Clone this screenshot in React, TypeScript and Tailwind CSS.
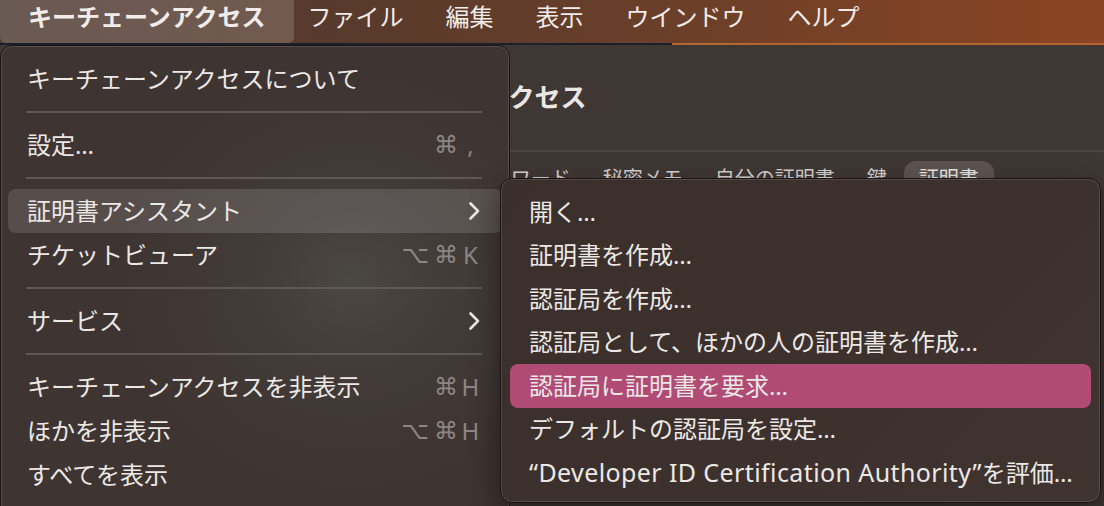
import React from "react";

const FONT = "font-['Noto_Sans','Noto_Sans_CJK_JP',sans-serif]";

function Chevron() {
  return (
    <svg width="14" height="20" viewBox="0 0 14 20" className="ml-auto mr-[2px]">
      <path d="M3.5 2.5 L11 10 L3.5 17.5" fill="none" stroke="#ece8e6" strokeWidth="2.6" strokeLinecap="round" strokeLinejoin="round" />
    </svg>
  );
}

function Shortcut({ mods, k }: { mods: string[]; k: string }) {
  return (
    <div className="ml-auto flex items-center text-[#8e8683]">
      <span className="flex gap-[5px] font-['DejaVu_Sans',sans-serif] text-[24px] leading-none">
        {mods.map((m, i) => (
          <span key={i}>{m}</span>
        ))}
      </span>
      <span className="w-[25px] text-center text-[24px] leading-none">{k}</span>
    </div>
  );
}

function Row({ children, right, active }: { children: React.ReactNode; right?: React.ReactNode; active?: boolean }) {
  return (
    <div
      className={
        "flex h-[44px] items-center rounded-[8px] pl-[19px] pr-[19px] " +
        (active ? "bg-white/[0.13]" : "")
      }
    >
      <span className="text-[24px] leading-[30px] text-[#ece8e6]">{children}</span>
      {right}
    </div>
  );
}

function Sep() {
  return (
    <div className="flex h-[22px] items-center pl-[18px] pr-[20px]">
      <div className="h-[1.5px] w-full bg-[#5f5754]" />
    </div>
  );
}

function SubRow({ children, active }: { children: React.ReactNode; active?: boolean }) {
  return (
    <div className={"flex h-[43.5px] items-center rounded-[8px] pl-[19px] " + (active ? "bg-[#b04b75]" : "")}>
      <span className="text-[24px] leading-[30px] text-[#ece8e6]">{children}</span>
    </div>
  );
}

export default function App() {
  return (
    <div className={"relative h-[506px] w-[1104px] overflow-hidden bg-[#3f3734] " + FONT}>
      {/* menu bar */}
      <div className="flex h-[43px] bg-[linear-gradient(90deg,#4d3b33_0%,#5a3a2b_35%,#6a3f29_60%,#8b4423_100%)] text-[24px] leading-[28px] text-[#f1ecea]">
        <div className="flex h-full items-start rounded-b-[6px] bg-white/[0.16] px-[28px] pt-[3px] font-bold">
          キーチェーンアクセス
        </div>
        <div className="ml-[14px] flex items-start gap-[42px] pt-[3px]">
          <span>ファイル</span>
          <span>編集</span>
          <span>表示</span>
          <span>ウインドウ</span>
          <span>ヘルプ</span>
        </div>
      </div>
      <div className="flex h-[2px]">
        <div className="w-[672px] bg-[#1a212d]" />
        <div className="flex-1 bg-[#b4662e]" />
      </div>

      {/* background window */}
      <div className="flex flex-col">
        <div className="ml-[329px] mt-[34px] text-[26px] font-bold leading-[36px] text-[#ebe6e4]">
          キーチェーンアクセス
        </div>
        <div className="mt-[35px] h-[2px] bg-[#4c4441]" />
        <div className="ml-[306px] mt-[9px] flex gap-[2px] text-[20px] leading-[36px] text-[#d6d0ce]">
          <span className="px-[15px]">すべての項目</span>
          <span className="px-[15px]">パスワード</span>
          <span className="px-[15px]">秘密メモ</span>
          <span className="px-[15px]">自分の証明書</span>
          <span className="px-[15px]">鍵</span>
          <span className="rounded-[12px] bg-[#5d5451] px-[15px] text-[#ebe6e4]">証明書</span>
        </div>
      </div>

      {/* main menu */}
      <div className="absolute left-0 top-[45px] h-[490px] w-[510px] rounded-[12px] border border-[#1a1311] bg-[radial-gradient(ellipse_230px_210px_at_350px_235px,#4b4743_0%,#423b38_45%,#3e3431_100%)] px-[7px] pt-[11px] shadow-[inset_0_0_0_1px_rgba(255,255,255,0.13)]">
        <Row>キーチェーンアクセスについて</Row>
        <Sep />
        <Row right={<Shortcut mods={["⌘"]} k="," />}>設定…</Row>
        <Sep />
        <Row active right={<Chevron />}>
          証明書アシスタント
        </Row>
        <Row right={<Shortcut mods={["⌥", "⌘"]} k="K" />}>チケットビューア</Row>
        <Sep />
        <Row right={<Chevron />}>サービス</Row>
        <Sep />
        <Row right={<Shortcut mods={["⌘"]} k="H" />}>キーチェーンアクセスを非表示</Row>
        <Row right={<Shortcut mods={["⌥", "⌘"]} k="H" />}>ほかを非表示</Row>
        <Row>すべてを表示</Row>
      </div>

      {/* submenu */}
      <div className="absolute left-[500px] top-[178px] w-[601px] rounded-[12px] border border-[#1a1311] bg-[linear-gradient(135deg,#3b2f2b_0%,#3c312d_60%,#3f3430_100%)] px-[9px] pb-[7px] pt-[11px] shadow-[inset_0_0_0_1px_rgba(255,255,255,0.13),0_12px_30px_rgba(0,0,0,0.45)]">
        <SubRow>開く…</SubRow>
        <SubRow>証明書を作成…</SubRow>
        <SubRow>認証局を作成…</SubRow>
        <SubRow>認証局として、ほかの人の証明書を作成…</SubRow>
        <SubRow active>認証局に証明書を要求…</SubRow>
        <SubRow>デフォルトの認証局を設定…</SubRow>
        <SubRow>
          <span className="text-[25px] tracking-[0.4px]">“Developer ID Certification Authority”</span>を評価…
        </SubRow>
      </div>
    </div>
  );
}
